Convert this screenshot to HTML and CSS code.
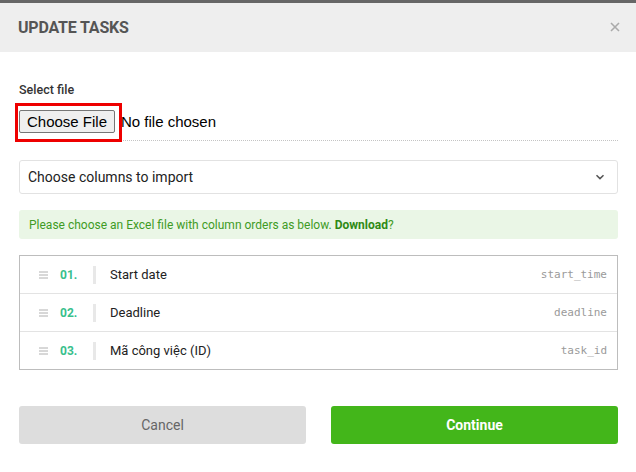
FILE: index.html
```html
<!DOCTYPE html>
<html>
<head>
<meta charset="utf-8">
<link rel="stylesheet" href="styles.css">
</head>
<body>
<div class="modal">
  <div class="header">
    <h1 class="title">UPDATE TASKS</h1>
    <svg class="close" width="12" height="12" viewBox="0 0 12 12"><path d="M2 2L10 10M10 2L2 10" stroke="#aaa" stroke-width="1.6" fill="none"/></svg>
  </div>
  <div class="body">
    <div class="label">Select file</div>
    <div class="file-row">
      <div class="highlight"><span class="file-btn">Choose File</span></div>
      <span class="file-text">No file chosen</span>
    </div>
    <div class="select">
      <span>Choose columns to import</span>
      <svg class="chev" width="10" height="6" viewBox="0 0 10 6"><path d="M1.5 1.2L5 4.6L8.5 1.2" stroke="#555" stroke-width="1.5" fill="none"/></svg>
    </div>
    <div class="alert"><span>Please choose an Excel file with column orders as below. <b>Download</b>?</span></div>
    <div class="list">
      <div class="row"><svg class="handle" width="9" height="8" viewBox="0 0 9 8"><path d="M0 1H9M0 4H9M0 7H9" stroke="#b0b0b0" stroke-width="1"/></svg><span class="num">01.</span><span class="sep"></span><span class="name">Start date</span><span class="code">start_time</span></div>
      <div class="row"><svg class="handle" width="9" height="8" viewBox="0 0 9 8"><path d="M0 1H9M0 4H9M0 7H9" stroke="#b0b0b0" stroke-width="1"/></svg><span class="num">02.</span><span class="sep"></span><span class="name">Deadline</span><span class="code">deadline</span></div>
      <div class="row"><svg class="handle" width="9" height="8" viewBox="0 0 9 8"><path d="M0 1H9M0 4H9M0 7H9" stroke="#b0b0b0" stroke-width="1"/></svg><span class="num">03.</span><span class="sep"></span><span class="name">Mã công việc (ID)</span><span class="code">task_id</span></div>
    </div>
    <div class="actions">
      <div class="btn cancel">Cancel</div>
      <div class="btn continue">Continue</div>
    </div>
  </div>
</div>
</body>
</html>
```
FILE: styles.css
```css
html, body { margin: 0; padding: 0; background: #fff; }
body { font-family: Roboto, "Noto Sans", sans-serif; color: #222; }
.modal { border-top: 3px solid #666; }
.header {
  height: 49px; background: #eeeeee;
  display: flex; align-items: center; justify-content: space-between;
  padding: 0 15px 0 18px;
}
.title { margin: 0; font-size: 16px; font-weight: 700; color: #555; letter-spacing: -0.2px; }
.close { display: block; margin-top: -1px; }
.body { padding: 30px 18px 0 19px; }
.label { font-size: 12.5px; font-weight: 500; color: #333; line-height: 16px; }
.file-row {
  margin-top: 5px; height: 37px;
  display: flex; align-items: center;
  border-bottom: 1px dotted #c4c4c4;
}
.highlight {
  position: relative; z-index: 1; align-self: flex-start;
  margin-left: -4px; border: 3px solid #ee0000; background: #fff;
  padding: 4px 4px 6px 1px; height: 23px;
}
.file-btn {
  display: flex; align-items: center; justify-content: center;
  box-sizing: border-box; width: 96px; height: 23px;
  background: #efefef; border: 1px solid #767676; border-radius: 2px;
  font-family: "Liberation Sans", Arial, sans-serif; font-size: 15px; color: #000;
}
.file-text {
  font-family: "Liberation Sans", Arial, sans-serif; font-size: 15px; color: #000;
  margin-left: -1px; margin-top: -1px;
}
.select {
  margin-top: 19px; height: 32px; border: 1px solid #e2e2e2; border-radius: 3px;
  display: flex; align-items: center; justify-content: space-between;
  padding: 0 12px 0 8px; font-size: 14px; color: #222;
}
.chev { display: block; }
.alert {
  margin-top: 16px; height: 29px; background: #eaf6e6; border-radius: 3px;
  display: flex; align-items: center; padding-left: 10px;
  font-size: 12px; color: #3f9b25;
}
.alert b { color: #2f8a15; font-weight: 700; }
.list { margin-top: 16px; border: 1px solid #bdbdbd; }
.row {
  height: 37px; display: flex; align-items: center;
  border-top: 1px solid #e3e3e3; padding-right: 10px;
}
.row:first-child { border-top: none; }
.handle { display: block; margin-left: 19px; flex: none; }
.num { margin-left: 12px; width: 33px; font-size: 12px; font-weight: 700; color: #38c08c; }
.sep { width: 3px; height: 18px; background: #e8e8e8; }
.name { margin-left: 14px; font-size: 13px; color: #222; flex: 1; }
.code { font-family: "DejaVu Sans Mono", monospace; font-size: 11px; color: #9a9a9a; }
.actions { margin-top: 36px; display: flex; gap: 25px; }
.btn {
  flex: 1; height: 38px; border-radius: 3px;
  display: flex; align-items: center; justify-content: center; font-size: 14px;
}
.cancel { background: #dddddd; color: #666; }
.continue { background: #43b61a; color: #fff; font-weight: 700; }
```
